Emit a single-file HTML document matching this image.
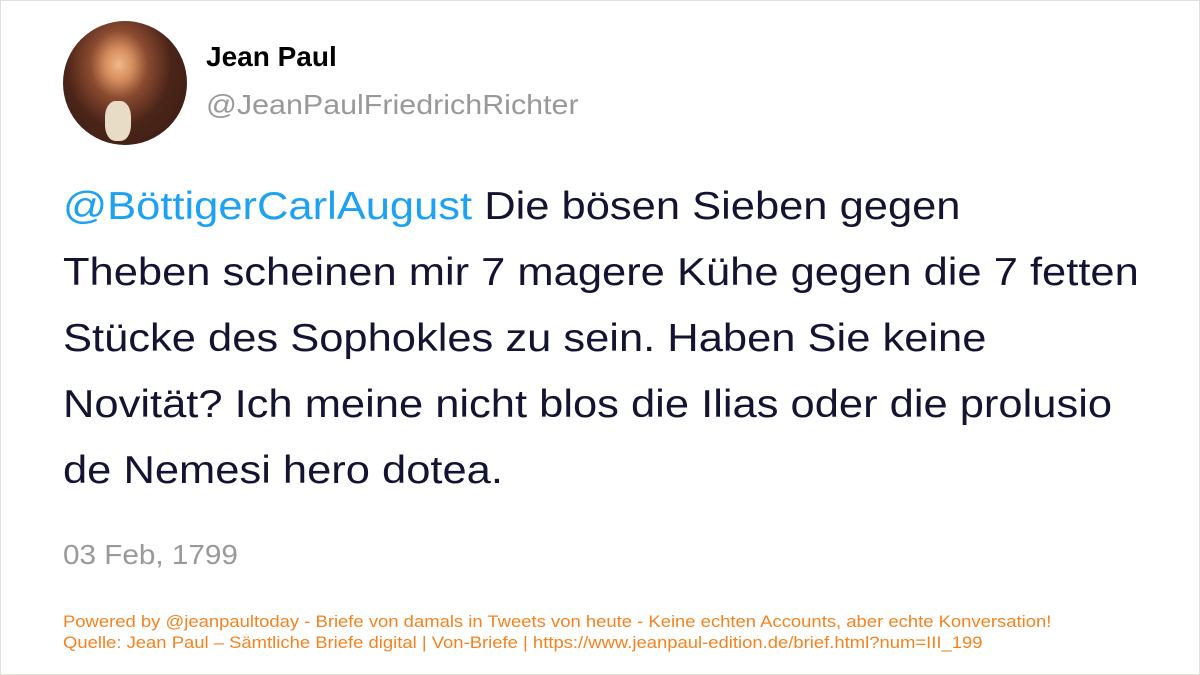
<!DOCTYPE html>
<html><head><meta charset="utf-8"><style>
html,body{margin:0;padding:0}
body{width:1200px;height:675px;background:#fff;position:relative;overflow:hidden;font-family:"Liberation Sans",sans-serif;box-sizing:border-box;border:1px solid #e0e0da}
.av{position:absolute;left:62px;top:20px;width:124px;height:124px;border-radius:50%;background:radial-gradient(ellipse at 45% 35%,#f2b98a 0,#d58e5e 14%,#8a4a30 30%,#4a2418 55%,#3a1c14 100%);overflow:hidden}
.av .c{position:absolute;left:42px;top:80px;width:26px;height:40px;background:#e9dcc6;border-radius:40%}
.s{transform-origin:left top;white-space:nowrap}
.name{position:absolute;left:205px;top:40px;font-weight:bold;font-size:28px;color:#000}
.handle{position:absolute;left:205px;top:88px;font-size:28px;color:#999;transform:scaleX(1.087)}
.txt{position:absolute;left:62px;top:173px;font-size:39px;line-height:66px;color:#141432;transform:scaleX(1.115)}
.txt span{color:#1da1f2}
.date{position:absolute;left:62px;top:538px;font-size:28px;color:#999;transform:scaleX(1.06)}
.foot{position:absolute;left:62px;top:610px;font-size:17px;line-height:21px;color:#f5821f;transform:scaleX(1.085)}
</style></head><body>
<div class="av"><div class="c"></div></div>
<div class="name">Jean Paul</div>
<div class="handle s">@JeanPaulFriedrichRichter</div>
<div class="txt s"><span>@BöttigerCarlAugust</span> Die bösen Sieben gegen<br>Theben scheinen mir 7 magere Kühe gegen die 7 fetten<br>Stücke des Sophokles zu sein. Haben Sie keine<br>Novität? Ich meine nicht blos die Ilias oder die prolusio<br>de Nemesi hero dotea.</div>
<div class="date s">03 Feb, 1799</div>
<div class="foot s">Powered by @jeanpaultoday - Briefe von damals in Tweets von heute - Keine echten Accounts, aber echte Konversation!<br>Quelle: Jean Paul – Sämtliche Briefe digital | Von-Briefe | https://www.jeanpaul-edition.de/brief.html?num=III_199</div>
</body></html>
